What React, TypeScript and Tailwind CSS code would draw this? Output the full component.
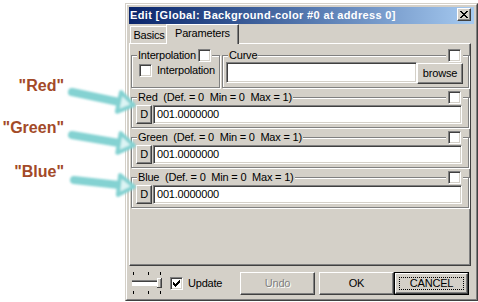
import type { ReactNode } from "react";

// Win2000-style bevels
const raised =
  "border border-white border-r-[#404040] border-b-[#404040] shadow-[inset_-1px_-1px_0_#808080] bg-[#d4d0c8]";
const sunken =
  "border border-[#808080] border-r-white border-b-white shadow-[inset_1px_1px_0_#404040,inset_-1px_-1px_0_#d4d0c8]";
const etched = "border border-[#808080] shadow-[inset_1px_1px_0_#fff,1px_1px_0_#fff]";

function Check({ checked = false }: { checked?: boolean }) {
  const cols = [2, 3, 4, 3, 2, 1, 0];
  return (
    <span className={`flex h-[13px] w-[13px] shrink-0 items-center justify-center bg-white ${sunken}`}>
      {checked && (
        <svg width="7" height="7" viewBox="0 0 7 7" shapeRendering="crispEdges">
          {cols.map((y, x) => (
            <rect key={x} x={x} y={y} width="1" height="3" fill="#000" />
          ))}
        </svg>
      )}
    </span>
  );
}

function Group({
  legend,
  check,
  boxClass,
  className = "",
  children,
}: {
  legend: ReactNode;
  check?: boolean;
  boxClass: string;
  className?: string;
  children: ReactNode;
}) {
  return (
    <div className={`relative pt-[6px] ${className}`}>
      <div className={`${etched} ${boxClass}`}>{children}</div>
      <div className="absolute left-[6px] top-0 flex h-[13px] items-center whitespace-pre bg-[#d4d0c8] px-px leading-[13px]">
        {legend}
      </div>
      {check && (
        <div className="absolute right-[6px] top-0 bg-[#d4d0c8] px-[2px]">
          <Check />
        </div>
      )}
    </div>
  );
}

function Param({ name }: { name: string }) {
  return (
    <Group
      legend={`${name}  (Def. = 0  Min = 0  Max = 1)`}
      check
      boxClass="flex h-[31px] pl-[4px] pr-[6px] pt-[7px]"
    >
      <div className={`flex h-[19px] w-[16px] items-center justify-center ${raised}`}>D</div>
      <div className={`ml-px h-[19px] flex-1 bg-white pl-[3px] leading-[17px] ${sunken}`}>001.0000000</div>
    </Group>
  );
}

function Slider() {
  return (
    <svg width="31" height="22" viewBox="0 0 31 22" shapeRendering="crispEdges">
      {[1, 16, 28].map((x) => (
        <g key={x}>
          <rect x={x} y="0" width="1" height="3" fill="#000" />
          <rect x={x} y="19" width="1" height="3" fill="#000" />
        </g>
      ))}
      <rect x="0" y="8" width="26" height="6" fill="#fff" />
      <rect x="0" y="8" width="26" height="1" fill="#808080" />
      <rect x="0" y="9" width="26" height="1" fill="#404040" />
      <rect x="25" y="6" width="5" height="10" fill="#d4d0c8" />
      <rect x="25" y="6" width="5" height="1" fill="#fff" />
      <rect x="25" y="6" width="1" height="10" fill="#fff" />
      <rect x="29" y="6" width="1" height="10" fill="#404040" />
      <rect x="25" y="15" width="5" height="1" fill="#404040" />
      <rect x="28" y="7" width="1" height="8" fill="#808080" />
    </svg>
  );
}

function CloseGlyph() {
  const rows = [
    [0, 1, 6, 7],
    [1, 2, 5, 6],
    [2, 3, 4, 5],
    [3, 4],
    [2, 3, 4, 5],
    [1, 2, 5, 6],
    [0, 1, 6, 7],
  ];
  return (
    <svg width="8" height="7" viewBox="0 0 8 7" shapeRendering="crispEdges">
      {rows.map((xs, y) => xs.map((x) => <rect key={`${x}-${y}`} x={x} y={y} width="1" height="1" fill="#000" />))}
    </svg>
  );
}

function Arrow({ from, to, base }: { from: [number, number]; to: [number, number]; base: number }) {
  const dx = to[0] - from[0];
  const dy = to[1] - from[1];
  const len = Math.hypot(dx, dy);
  const ux = dx / len;
  const uy = dy / len;
  const px = -uy;
  const py = ux;
  const tip = [to[0] + ux * base * 1.5, to[1] + uy * base * 1.5];
  const a = [to[0] + px * base, to[1] + py * base];
  const b = [to[0] - px * base, to[1] - py * base];
  return (
    <g filter="url(#glow)">
      <line x1={from[0]} y1={from[1]} x2={to[0]} y2={to[1]} stroke="#84d2d2" strokeWidth="8" strokeLinecap="round" />
      <polygon
        points={`${a[0]},${a[1]} ${tip[0]},${tip[1]} ${b[0]},${b[1]}`}
        fill="#dcf4f4"
        stroke="#84d2d2"
        strokeWidth="4"
        strokeLinejoin="round"
      />
    </g>
  );
}

export default function App() {
  return (
    <div className="relative h-[302px] w-[478px] overflow-hidden bg-white font-['Liberation_Sans',Arial,sans-serif] text-[11px] leading-[13px] tracking-[-0.2px] text-black">
      {/* dialog window */}
      <div className="ml-[125px] mt-[3px] h-[298px] w-[353px] border border-[#d4d0c8] border-r-[#404040] border-b-[#404040]">
        <div className="flex h-full flex-col border border-white border-r-[#808080] border-b-[#808080] bg-[#d4d0c8] p-[2px]">
          <div className="flex h-[17px] shrink-0 items-start bg-linear-to-r from-[#0a246a] to-[#a6caf0] pl-px pr-[3px] pt-[2px]">
            <span className="flex-1 whitespace-nowrap font-bold tracking-[0.35px] text-white">
              Edit [Global: Background-color #0 at address 0]
            </span>
            <div className={`-mt-px flex h-[13px] w-[14px] items-center justify-center ${raised}`}>
              <CloseGlyph />
            </div>
          </div>

          <div className="relative z-10 flex h-[19px] shrink-0 items-end pl-px">
            <div className="flex h-[17px] w-[38px] items-center justify-center border-l border-t border-white border-r border-r-[#404040] shadow-[inset_-1px_0_0_#808080]">
              Basics
            </div>
            <div className="-mb-px -ml-[2px] flex h-[20px] w-[73px] items-start justify-center border-l border-t border-white border-r border-r-[#404040] bg-[#d4d0c8] pt-[2px] shadow-[inset_-1px_0_0_#808080]">
              Parameters
            </div>
          </div>

          <div className="flex h-[223px] w-[342px] shrink-0 flex-col gap-[3px] border border-white border-r-[#404040] border-b-[#404040] px-px pt-[5px] shadow-[inset_-1px_-1px_0_#808080]">
            <div className="flex gap-[2px]">
              <Group
                className="w-[89px]"
                legend={
                  <span className="flex items-center gap-[2px]">
                    Interpolation
                    <Check />
                  </span>
                }
                boxClass="flex h-[33px] items-start pl-[7px] pt-[8px]"
              >
                <Check />
                <span className="ml-[5px]">Interpolation</span>
              </Group>
              <Group className="flex-1" legend="Curve" check boxClass="flex h-[33px] items-start pl-[3px] pr-[5px] pt-[6px]">
                <div className={`h-[21px] flex-1 bg-white ${sunken}`} />
                <div className={`mt-px flex h-[21px] w-[46px] items-center justify-center ${raised}`}>browse</div>
              </Group>
            </div>
            <Param name="Red" />
            <Param name="Green" />
            <Param name="Blue" />
          </div>

          <div className="flex h-[31px] shrink-0 items-start pl-[3px] pr-[5px] pt-[6px]">
            <Slider />
            <div className="ml-[7px] mt-[5px]">
              <Check checked />
            </div>
            <span className="ml-[5px] mt-[5px]">Update</span>
            <div className="flex-1" />
            <div className={`flex h-[23px] w-[75px] items-center justify-center text-[#808080] [text-shadow:1px_1px_0_#fff] ${raised}`}>
              Undo
            </div>
            <div className={`ml-[4px] flex h-[23px] w-[75px] items-center justify-center ${raised}`}>OK</div>
            <div className="h-[23px] w-[75px] border border-black">
              <div className={`flex h-full w-full items-center justify-center p-[3px] ${raised}`}>
                <div className="flex h-full w-full items-center justify-center border border-dotted border-black">CANCEL</div>
              </div>
            </div>
          </div>
        </div>
      </div>

      {/* annotations */}
      <div className="absolute left-0 top-[78px] w-[64px] text-right text-[16px] font-bold leading-[16px] tracking-normal text-[#a34a28]">
        "Red"
      </div>
      <div className="absolute left-0 top-[120px] w-[64px] text-right text-[16px] font-bold leading-[16px] tracking-normal text-[#a34a28]">
        "Green"
      </div>
      <div className="absolute left-0 top-[164px] w-[64px] text-right text-[16px] font-bold leading-[16px] tracking-normal text-[#a34a28]">
        "Blue"
      </div>
      <svg className="pointer-events-none absolute left-0 top-0" width="478" height="302" viewBox="0 0 478 302">
        <defs>
          <filter id="glow" x="-20%" y="-50%" width="140%" height="200%">
            <feGaussianBlur stdDeviation="1.1" />
          </filter>
        </defs>
        <Arrow from={[72, 92]} to={[119, 102]} base={10} />
        <Arrow from={[72, 135]} to={[119, 143]} base={10} />
        <Arrow from={[74, 180]} to={[119, 185]} base={10} />
      </svg>
    </div>
  );
}
